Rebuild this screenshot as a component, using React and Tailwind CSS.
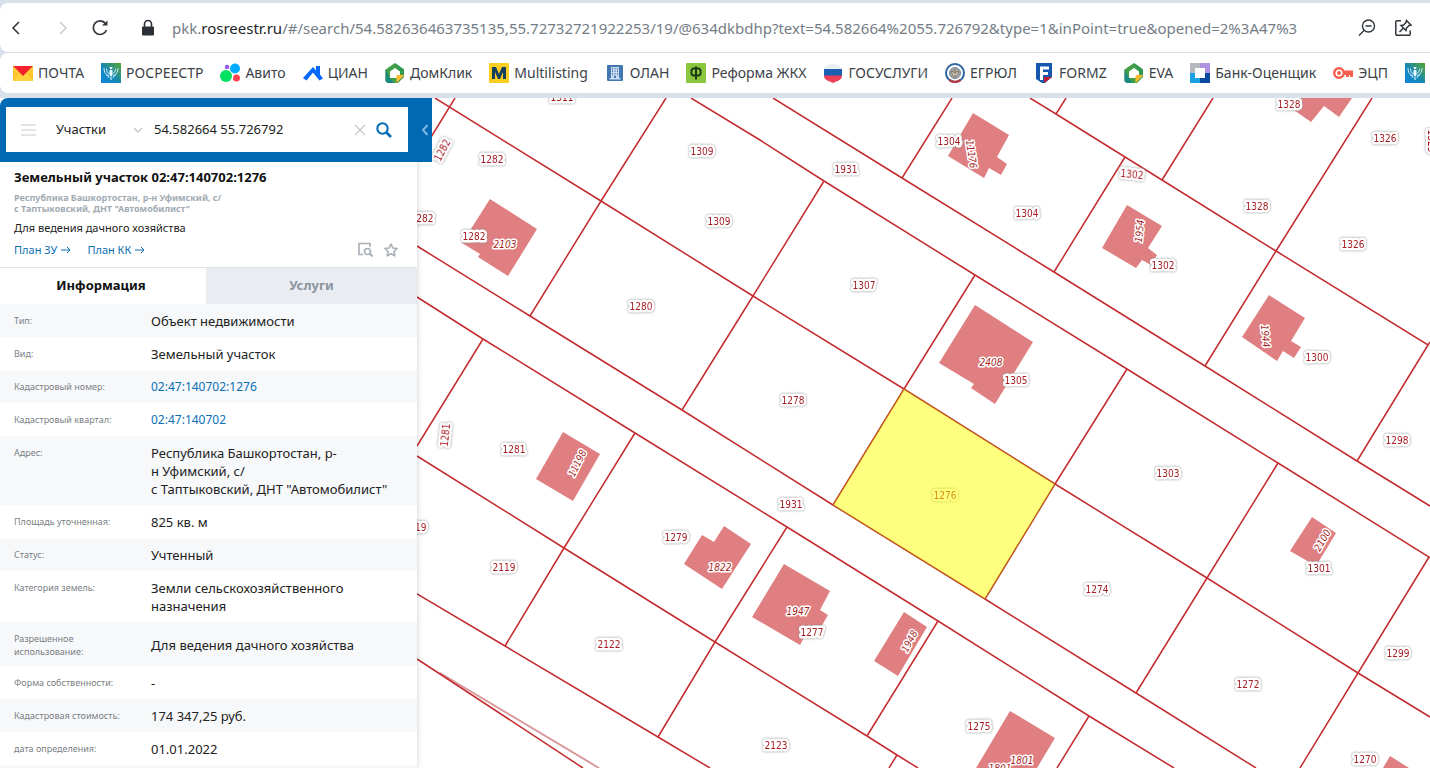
import React, { useState } from "react";

function RosreestrIcon() {
  return (
    <svg className="h-5 w-5" viewBox="0 0 20 20">
      <defs>
        <linearGradient id="rr" x1="0" y1="1" x2="1" y2="0">
          <stop offset="0" stopColor="#0f86e0" />
          <stop offset="0.45" stopColor="#1688b8" />
          <stop offset="1" stopColor="#57a62a" />
        </linearGradient>
      </defs>
      <rect width="20" height="20" fill="url(#rr)" />
      <g fill="none" stroke="#d6f0fb" strokeWidth="1">
        <path d="M3 5c0 4.500 2 7 5 7.500M17 5c0 4.500-2 7-5 7.500M5.500 5.500c0 3 1 4.500 3 5M14.500 5.500c0 3-1 4.500-3 5M5.500 12l3 3M14.500 12l-3 3" />
      </g>
      <path d="M8.500 4h3l-.5 2h-2zM8.500 7h3v5L10 14l-1.500-2zM9.500 14h1v3h-1z" fill="#e6f7ff" />
    </svg>
  );
}

function HouseIcon() {
  return (
    <svg className="h-5 w-5" viewBox="0 0 20 20">
      <path d="M10 0L.5 6.500V18l2 2H13l6-6V6.500z" fill="#43a047" />
      <path d="M.5 6.500V18l2 2H9l-4-5z" fill="#1c8a7c" />
      <path d="M10 0l9 6.500V12l-4-3z" fill="#2e9a50" />
      <path d="M10 5L5 8.500V15h6.500l3.500-3.500v-3z" fill="#fff" />
      <path d="M11.500 20v-6.500c0-1 .5-1.500 1.500-1.500h6.500z" fill="#fbb930" />
    </svg>
  );
}

const BOOKMARKS = [
  {
    title: "ПОЧТА",
    icon: (
      <svg className="h-5 w-5" viewBox="0 0 20 20">
        <rect y="3" width="20" height="15" fill="#ffd33e" />
        <path d="M0 18V5l6 6zM20 18V5l-6 6z" fill="#ffc42b" />
        <path d="M0 3h20l-10 10z" fill="#f5222d" />
      </svg>
    ),
  },
  { title: "РОСРЕЕСТР", icon: <RosreestrIcon /> },
  {
    title: "Авито",
    icon: (
      <svg className="h-5 w-5" viewBox="0 0 20 20">
        <circle cx="6" cy="13" r="6" fill="#04e061" />
        <circle cx="15" cy="5.500" r="5" fill="#00aaff" />
        <circle cx="16.500" cy="15" r="3.500" fill="#ff4053" />
        <circle cx="7" cy="4" r="2.300" fill="#965eeb" />
      </svg>
    ),
  },
  {
    title: "ЦИАН",
    icon: (
      <svg className="h-5 w-5" viewBox="0 0 20 20">
        <path d="M0 15L10 4l3 3.500V3h4v8.500l3 4-3.500 2L10 9.500l-6.500 8z" fill="#0468ff" />
      </svg>
    ),
  },
  { title: "ДомКлик", icon: <HouseIcon /> },
  {
    title: "Multilisting",
    icon: (
      <svg className="h-5 w-5" viewBox="0 0 20 20">
        <rect width="20" height="20" rx="1" fill="#fbcf1f" />
        <path d="M3 16V4h4l3 7 3-7h4v12h-3V9l-3 7H9L6 9v7z" fill="#14405f" />
      </svg>
    ),
  },
  {
    title: "ОЛАН",
    icon: (
      <svg className="h-5 w-5" viewBox="0 0 20 20">
        <rect x="2" y="2" width="16" height="16" rx="1" fill="#4377b4" />
        <path d="M6 4h8v11H6zM4.500 15h11v1.500h-11z" fill="#c9dcf0" />
        <path d="M7.500 5v8M10 5v8M12.500 5v8" stroke="#4377b4" strokeDasharray="1.5 1" />
        <path d="M9 13h2v2H9z" fill="#4377b4" />
      </svg>
    ),
  },
  {
    title: "Реформа ЖКХ",
    icon: (
      <svg className="h-5 w-5" viewBox="0 0 20 20">
        <rect width="20" height="20" rx="1" fill="#8bc63e" />
        <path d="M10 3.500v13M7 5.500h6l1.500 1.500v4l-1.500 1.500H7L5.500 11V7z" fill="none" stroke="#1f3d14" strokeWidth="2" />
      </svg>
    ),
  },
  {
    title: "ГОСУСЛУГИ",
    icon: (
      <svg className="h-5 w-5" viewBox="0 0 20 20">
        <path d="M1 5l3-3 6-1.500L16 2l3 3v2H1z" fill="#eceff3" />
        <path d="M1 6h18v7H1z" fill="#1d5fb0" />
        <path d="M1 12.500h18c0 2-1 3.500-3 4.700L10 20l-6-2.800c-2-1.200-3-2.700-3-4.700z" fill="#ee3f58" />
      </svg>
    ),
  },
  {
    title: "ЕГРЮЛ",
    icon: (
      <svg className="h-5 w-5" viewBox="0 0 20 20">
        <circle cx="10" cy="10" r="9" fill="#fff" stroke="#2d64a0" strokeWidth="2" />
        <path d="M4.500 17A9 9 0 0 0 15.500 17" fill="none" stroke="#b23a44" strokeWidth="2.500" />
        <circle cx="10" cy="10" r="5.500" fill="#a9a49c" stroke="#6c87a8" />
        <path d="M6.500 8l3.500 2 3.500-2-1 4-2.500 2-2.500-2zM10 6v8" fill="#ded6c8" stroke="#77695a" strokeWidth="0.8" />
      </svg>
    ),
  },
  {
    title: "FORMZ",
    icon: (
      <svg className="h-5 w-5" viewBox="0 0 20 20">
        <path d="M2 0h16v14l-7 6H8l-6-4z" fill="#1556ae" />
        <path d="M10 20v-6h8z" fill="#c11f36" />
        <path d="M6 17V3.500h9v3H9v2.500h5v3H9v5z" fill="#fff" />
      </svg>
    ),
  },
  { title: "EVA", icon: <HouseIcon /> },
  {
    title: "Банк-Оценщик",
    icon: (
      <svg className="h-5 w-5" viewBox="0 0 20 20">
        <path d="M0 0h10v10H0z" fill="#b5b8bf" />
        <path d="M10 0h10v10H10z" fill="#ae93e0" />
        <path d="M0 10h10v10H0z" fill="#1aa0e4" />
        <path d="M10 10h10v10H10z" fill="#0a4ba0" />
        <path d="M5 5h10v10H5z" fill="#fff" />
      </svg>
    ),
  },
  {
    title: "ЭЦП",
    icon: (
      <svg className="h-5 w-5" viewBox="0 0 20 20">
        <circle cx="6" cy="10" r="4.800" fill="none" stroke="#f65d4d" strokeWidth="2.400" />
        <circle cx="6" cy="10" r="2" fill="#f65d4d" />
        <path d="M10 7.500h10v6.500h-3v-2h-1v2h-3v-2h-3z" fill="#f65d4d" />
      </svg>
    ),
  },
  { title: "", icon: <RosreestrIcon /> },
];

const DETAILS = [
  { label: "Тип:", value: "Объект недвижимости" },
  { label: "Вид:", value: "Земельный участок" },
  { label: "Кадастровый номер:", value: "02:47:140702:1276", link: true },
  { label: "Кадастровый квартал:", value: "02:47:140702", link: true },
  {
    label: "Адрес:",
    value: 'Республика Башкортостан, р-\nн Уфимский, с/\nс Таптыковский, ДНТ "Автомобилист"',
  },
  { label: "Площадь уточненная:", value: "825 кв. м" },
  { label: "Статус:", value: "Учтенный" },
  { label: "Категория земель:", value: "Земли сельскохозяйственного\nназначения" },
  { label: "Разрешенное\nиспользование:", value: "Для ведения дачного хозяйства" },
  { label: "Форма собственности:", value: "-" },
  { label: "Кадастровая стоимость:", value: "174 347,25 руб." },
  { label: "дата определения:", value: "01.01.2022" },
];

const PARCEL_LINES = [
  // rows along the roads
  "435,98 601,201 753,296 904,389 1055,484 1207,578 1358,673 1430,717",
  "417,246 530,316 682,410 833,505 985,599 1136,693 1256,768",
  "417,297 483,339 635,433 787,527 938,621 1089,716 1174,768",
  "417,456 564,548 715,642 867,736 897,755 918,768",
  "417,594 505,646 658,737 710,768",
  "417,659 440,674 583,768",
  "691,98 760,140 824,181 975,275 1127,369 1278,463 1429,557 1430,558",
  "773,98 902,178 1054,272 1205,366 1357,461 1430,506",
  "1030,98 1056,114 1125,157 1162,180 1276,251 1428,345 1430,342",
  // plot sides
  "455,98 417,160",
  "666,98 601,201 530,316",
  "824,181 753,296 682,410",
  "952,98 902,178",
  "975,275 904,389 833,505",
  "1066,98 1056,114",
  "1125,157 1054,272",
  "1213,98 1162,180",
  "1372,98 1276,251 1205,366",
  "1127,369 1055,484 985,599",
  "1278,463 1207,578 1136,693",
  "1429,557 1358,673 1300,768",
  "1428,345 1357,461",
  "1089,716 1057,768",
  "938,621 867,736",
  "897,755 889,768",
  "787,527 715,642 658,737",
  "635,433 564,548 505,646",
  "483,339 417,446",
];

const BUILDINGS = [
  "490,199 537,229 508,276 478,257 480,254 462,243",
  "973,113 1009,135 997,157 1007,164 1001,175 989,168 984,178 948,156",
  "975,305 1033,342 995,404 971,388 974,384 939,363",
  "1289,98 1352,98 1339,117 1324,106 1311,122 1291,108",
  "1127,205 1162,226 1148,248 1157,255 1151,265 1142,260 1136,268 1102,248",
  "1269,295 1305,318 1291,341 1301,347 1294,358 1283,351 1277,361 1242,337",
  "563,432 600,454 573,501 536,479",
  "724,526 751,544 722,589 684,564 702,535 714,542",
  "784,564 830,591 820,610 828,615 817,634 806,634 800,645 752,617",
  "904,612 927,627 898,676 874,661",
  "1010,711 1055,738 1037,768 976,768",
  "1312,517 1336,533 1316,566 1290,551",
  "1390,756 1409,768 1383,768",
];

// [text, x, y, rotation, italic]
const LABELS = [
  ["1311", 562, 97],
  ["1282", 442, 150, -62],
  ["1282", 492, 159],
  ["1309", 702, 151],
  ["1309", 719, 221],
  ["1282", 422, 218],
  ["1282", 474, 236],
  ["2103", 505, 244, 0, true],
  ["1280", 641, 306],
  ["1931", 846, 169],
  ["1304", 949, 141],
  ["11176", 972, 154, 82, true],
  ["1304", 1027, 213],
  ["1307", 864, 285],
  ["2408", 991, 362, 0, true],
  ["1305", 1016, 380],
  ["1278", 793, 400],
  ["1328", 1289, 104],
  ["1326", 1385, 138],
  ["1302", 1132, 174, 6],
  ["1328", 1257, 206],
  ["1326", 1353, 244],
  ["1954", 1139, 231, -84, true],
  ["1302", 1163, 265],
  ["1944", 1266, 336, 85, true],
  ["1300", 1317, 357],
  ["1325", 1432, 141, 90],
  ["1298", 1397, 440],
  ["1281", 445, 435, -84],
  ["1281", 514, 449],
  ["11198", 577, 463, -64, true],
  ["2119", 415, 527],
  ["2119", 504, 567],
  ["1279", 676, 537],
  ["1822", 720, 567, 0, true],
  ["1931", 791, 504],
  ["2122", 609, 644],
  ["1947", 798, 611, 0, true],
  ["1277", 812, 632],
  ["1948", 909, 641, -62, true],
  ["1276", 945, 495],
  ["1303", 1168, 473],
  ["1274", 1097, 589],
  ["2100", 1322, 540, -60, true],
  ["1301", 1319, 568],
  ["1299", 1398, 653],
  ["1272", 1248, 684],
  ["1275", 979, 726],
  ["1801", 1022, 760, 0, true],
  ["1801", 1000, 768, 0, true],
  ["2123", 776, 745],
  ["1270", 1365, 759],
];

function CadastralMap() {
  return (
    <svg
      className="h-full w-full"
      viewBox="417 98 1013 670"
      preserveAspectRatio="xMinYMin slice"
      role="img"
      aria-label="Карта"
    >
      <g fill="#df7f81">
        {BUILDINGS.map((points) => (
          <polygon key={points} points={points} />
        ))}
      </g>
      <path d="M440 673L599 768" stroke="#d99a9d" strokeWidth="2" />
      <g fill="none" stroke="#c42b2f" strokeWidth="1.5">
        {PARCEL_LINES.map((points) => (
          <polyline key={points} points={points} />
        ))}
      </g>
      <g
        className="font-['DejaVu_Sans_Condensed','DejaVu_Sans',sans-serif] text-[10px]"
        fill="#a61e24"
        stroke="#fff"
        strokeLinejoin="round"
        textAnchor="middle"
      >
        {LABELS.map(([text, x, y, angle = 0, italic], i) => (
          <text
            key={i}
            x={x}
            y={y + 4}
            transform={`rotate(${angle} ${x} ${y})`}
            fontStyle={italic ? "italic" : "normal"}
            paintOrder="stroke"
            className={italic ? "" : "drop-shadow-[0_0_1px_#8a8a8a]"}
            strokeWidth={italic ? 3 : 5}
          >
            {text}
          </text>
        ))}
      </g>
      {/* selected plot */}
      <polygon
        points="904,389 1055,484 985,599 833,505"
        fill="#ffff00"
        fillOpacity="0.5"
        stroke="#b8641e"
        strokeWidth="1"
      />
    </svg>
  );
}

function BrowserBar() {
  return (
    <header className="flex flex-col bg-[#d8e1e9] pt-[3px] pb-[5px] font-['Noto_Sans',sans-serif]">
      <div className="flex h-[49px] items-center rounded-l-lg bg-white pr-[17px] pl-1.5">
        <button aria-label="Назад">
          <svg className="h-5 w-5" viewBox="0 0 20 20" fill="none" stroke="#30363c" strokeWidth="1.6">
            <path d="M13 4l-6 6 6 6" />
          </svg>
        </button>
        <button aria-label="Вперед" className="ml-7">
          <svg className="h-5 w-5" viewBox="0 0 20 20" fill="none" stroke="#c3c6c9" strokeWidth="1.4">
            <path d="M6 4l6 6-6 6" />
          </svg>
        </button>
        <button aria-label="Обновить" className="ml-4">
          <svg className="h-5 w-5" viewBox="0 0 20 20" fill="none" stroke="#30363c" strokeWidth="1.7">
            <path d="M15.500 5.500A6.800 6.800 0 1 0 16.500 12" />
            <path d="M12 7.500h5.500V2.500z" fill="#30363c" stroke="none" />
          </svg>
        </button>
        <svg className="ml-7 h-5 w-5" viewBox="0 0 20 20">
          <rect x="4" y="8.500" width="12" height="9" rx="1" fill="#2b3036" />
          <path d="M6.500 9V6a3.500 3.500 0 0 1 7 0v3" fill="none" stroke="#2b3036" strokeWidth="1.6" />
        </svg>
        <button
          aria-label="Адресная строка"
          className="ml-3.5 min-w-0 flex-1 overflow-hidden text-left text-[15px] leading-5 whitespace-nowrap text-[#747d86]"
        >
          pkk.<span className="text-[#22262a]">rosreestr.ru</span>
          /#/search/54.582636463735135,55.72732721922253/19/@634dkbdhp?text=54.582664%2055.726792&amp;type=1&amp;inPoint=true&amp;opened=2%3A47%3
        </button>
        <button aria-label="Масштаб" className="ml-[26px]">
          <svg className="h-5 w-5" viewBox="0 0 20 20" fill="none" stroke="#30363c" strokeWidth="1.4">
            <circle cx="11.500" cy="8" r="6" />
            <path d="M7 12.500L2 17.500M8.500 8h6" />
          </svg>
        </button>
        <button aria-label="Поделиться" className="ml-4">
          <svg className="h-5 w-5" viewBox="0 0 20 20" fill="none" stroke="#30363c" strokeWidth="1.5">
            <path d="M8 2.800H4a1.200 1.200 0 0 0-1.200 1.200v12A1.200 1.200 0 0 0 4 17.200h12a1.200 1.200 0 0 0 1.200-1.200V12.500" />
            <path d="M13.500 2.500l4.500 4.500-2 .5-2.500 2.500-.5 2.500-5-5L10.500 7 13 4.500zM10 10.500l-3.500 3.500" />
          </svg>
        </button>
      </div>
      <nav className="mt-px flex h-10 items-center gap-[17px] overflow-hidden rounded-l-lg bg-white pl-[13px]">
        {BOOKMARKS.map(({ title, icon }, i) => (
          <a
            key={i}
            href="#"
            aria-label={title || "Закладка"}
            className="flex shrink-0 items-center gap-[5px] text-[14px] leading-5 text-[#3c4248]"
          >
            {icon}
            {title}
          </a>
        ))}
      </nav>
    </header>
  );
}

function SearchBar() {
  const [query, setQuery] = useState("54.582664 55.726792");
  return (
    <form
      onSubmit={(e) => e.preventDefault()}
      className="relative rounded-tl-lg bg-[#0069b4] pt-[9px] pr-[9px] pb-2.5 pl-1.5"
    >
      <div className="flex h-[45px] items-center bg-white pr-4 pl-[15px] text-[13px] text-[#222]">
        <button type="button" aria-label="Меню">
          <svg className="h-4 w-4" viewBox="0 0 16 16" stroke="#dcdcdc" strokeWidth="1.4">
            <path d="M0 3h15M0 8h15M0 13h15" />
          </svg>
        </button>
        <div className="relative ml-[19px] flex w-[88px] items-center">
          <select aria-label="Раздел" className="w-full appearance-none bg-transparent outline-none">
            <option>Участки</option>
          </select>
          <svg
            className="pointer-events-none absolute right-0 h-3 w-3"
            viewBox="0 0 12 12"
            fill="none"
            stroke="#c4c8cc"
            strokeWidth="1.4"
          >
            <path d="M2 4l4 4 4-4" />
          </svg>
        </div>
        <input
          aria-label="Поиск"
          value={query}
          onChange={(e) => setQuery(e.target.value)}
          className="ml-2.5 min-w-0 flex-1 outline-none"
        />
        <button type="button" aria-label="Очистить" onClick={() => setQuery("")}>
          <svg className="h-3 w-3" viewBox="0 0 12 12" stroke="#c4c8cc" strokeWidth="1.3">
            <path d="M1 1l10 10M11 1L1 11" />
          </svg>
        </button>
        <button aria-label="Найти" className="ml-2.5">
          <svg className="h-4 w-4" viewBox="0 0 16 16" fill="none" stroke="#0069b4" strokeWidth="2">
            <circle cx="6.500" cy="6.500" r="5.200" />
            <path d="M10.500 10.500L15 15" strokeWidth="2.600" />
          </svg>
        </button>
      </div>
      <button
        type="button"
        aria-label="Свернуть панель"
        className="absolute top-0 left-full flex h-full w-[15px] items-center justify-center bg-[#0069b4]"
      >
        <svg className="h-3 w-3" viewBox="0 0 12 12" fill="none" stroke="#7fb8e4" strokeWidth="2">
          <path d="M8.500 1L4 6l4.500 5" />
        </svg>
      </button>
    </form>
  );
}

function PlanLink({ children }) {
  return (
    <a href="#" className="flex items-center gap-1">
      {children}
      <svg className="h-2.5 w-2.5" viewBox="0 0 10 10" fill="none" stroke="#0c6fb4">
        <path d="M0 5h9M6 2l3 3-3 3" />
      </svg>
    </a>
  );
}

function Sidebar() {
  return (
    <aside className="relative z-10 w-[417px] shrink-0 bg-white font-['Noto_Sans',sans-serif] shadow-[0_0_6px_rgba(0,0,0,0.2)]">
      <SearchBar />
      <section className="border-b border-[#e3e6e9] px-3.5 pt-[6px] pb-2">
        <h1 className="text-[13px] leading-[18px] font-bold text-[#111]">
          Земельный участок 02:47:140702:1276
        </h1>
        <p className="mt-1.5 text-[9px] leading-[11px] font-bold text-[#a3abb2]">
          Республика Башкортостан, р-н Уфимский, с/
          <br />с Таптыковский, ДНТ "Автомобилист"
        </p>
        <p className="mt-1.5 text-[11px] leading-4 text-[#222]">Для ведения дачного хозяйства</p>
        <div className="mt-[5px] flex items-center text-[11px] leading-[18px] text-[#0c6fb4]">
          <div className="flex flex-1 gap-4">
            <PlanLink>План ЗУ</PlanLink>
            <PlanLink>План КК</PlanLink>
          </div>
          <button aria-label="Найти на карте">
            <svg className="h-4 w-4" viewBox="0 0 16 16" fill="none" stroke="#a9b0b7" strokeWidth="1.6">
              <path d="M6 12.500H2V1.500h11V5" />
              <circle cx="10.500" cy="9.500" r="3" />
              <path d="M12.500 11.500l3 3" strokeWidth="2" />
            </svg>
          </button>
          <button aria-label="В избранное" className="mr-1 ml-2.5">
            <svg className="h-4 w-4" viewBox="0 0 16 16" fill="none" stroke="#a9b0b7" strokeWidth="1.6" strokeLinejoin="round">
              <path d="M8 2l1.800 4 4.300.5-3.200 3 .9 4.300L8 11.700l-3.800 2.100.9-4.300-3.200-3L6.200 6z" />
            </svg>
          </button>
        </div>
      </section>
      <div role="tablist" className="flex h-9 text-[13px] font-bold">
        <button role="tab" aria-selected="true" className="w-[206px] pr-1 text-[#111]">
          Информация
        </button>
        <button role="tab" aria-selected="false" className="flex-1 bg-[#e9edf1] text-[#8b949d]">
          Услуги
        </button>
      </div>
      <div className="border-b-[3px] border-[#f6f8fa]">
        <table className="w-full">
          <tbody>
            {DETAILS.map(({ label, value, link }) => (
              <tr key={label} className="odd:bg-[#f6f8fa]">
                <th
                  scope="row"
                  className="w-[151px] pt-2.5 pb-2 pl-3.5 text-left align-top text-[9px] leading-[13px] font-normal whitespace-pre-line text-[#7a7f84]"
                >
                  {label}
                </th>
                <td className="pt-2 pb-[7px] align-middle text-[13px] leading-[18px] whitespace-pre text-[#222]">
                  {link ? (
                    <a href="#" className="block text-[12px] text-[#0c6fb4]">
                      {value}
                    </a>
                  ) : (
                    value
                  )}
                </td>
              </tr>
            ))}
          </tbody>
        </table>
      </div>
    </aside>
  );
}

export default function App() {
  return (
    <div className="flex h-screen flex-col bg-white pb-4">
      <BrowserBar />
      <main className="flex min-h-0 flex-1 overflow-hidden">
        <Sidebar />
        <div className="min-w-0 flex-1">
          <CadastralMap />
        </div>
      </main>
    </div>
  );
}
